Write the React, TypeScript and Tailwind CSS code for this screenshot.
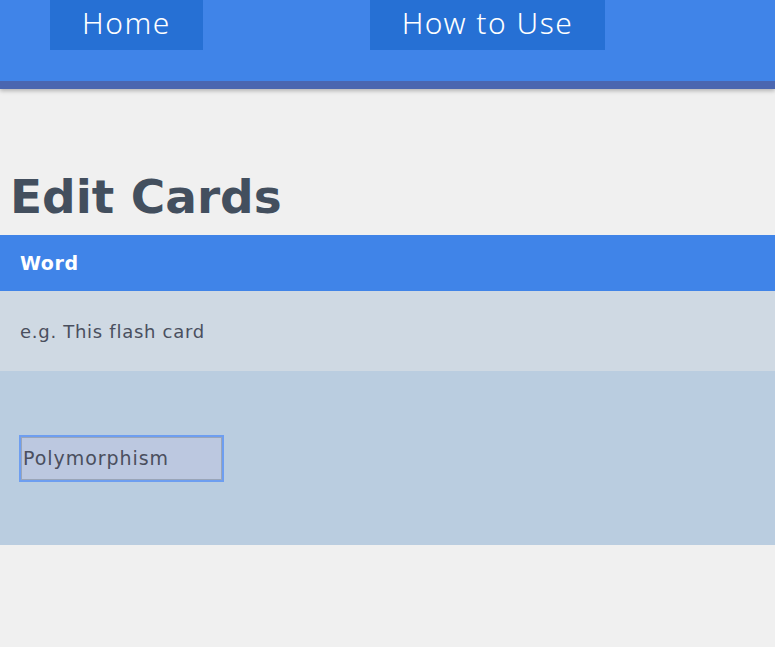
import { useState } from 'react'

export default function App() {
  const [word, setWord] = useState('Polymorphism')

  return (
    <div className="min-h-screen bg-[#f0f0f0] font-['DejaVu_Sans',sans-serif]">
      {/* Nav */}
      <nav className="h-[89px] bg-[#4084e8] border-b-[8px] border-[#4a66b0] shadow-[0_2px_4px_rgba(0,0,0,0.25)]">
        <div className="flex font-['Noto_Sans',sans-serif]">
          <a className="ml-[50px] w-[153px] h-[50px] bg-[#2670d4] flex items-center justify-center text-white text-[30px] font-light tracking-[0.05em] leading-none pb-1">
            Home
          </a>
          <a className="ml-[167px] w-[235px] h-[50px] bg-[#2670d4] flex items-center justify-center text-white text-[30px] font-light tracking-[0.05em] leading-none pb-1">
            How to Use
          </a>
        </div>
      </nav>

      {/* Content */}
      <div className="pt-[70px]">
        <h1 className="px-[10px] text-[47px] font-bold text-[#434f5e] leading-[76px]">Edit Cards</h1>
        <div className="h-[56px] bg-[#4084e8] flex items-center px-5 text-white text-[19px] font-bold tracking-[0.03em]">Word</div>
        <div className="h-[80px] bg-[#cfd9e3] flex items-center px-5 text-[18px] tracking-[0.04em] text-[#4a4f5e]">e.g. This flash card</div>
        <div className="h-[174px] bg-[#bacde0] flex items-center px-5">
          <input
            autoFocus
            value={word}
            onChange={(e) => setWord(e.target.value)}
            className="ml-px w-[201px] h-[43px] px-px bg-[#bcc8e0] border border-[#9aa5b8] outline-2 outline-[#6e9ef0] text-[19px] tracking-[0.05em] text-[#4a4f5e]"
          />
        </div>
      </div>
    </div>
  )
}
